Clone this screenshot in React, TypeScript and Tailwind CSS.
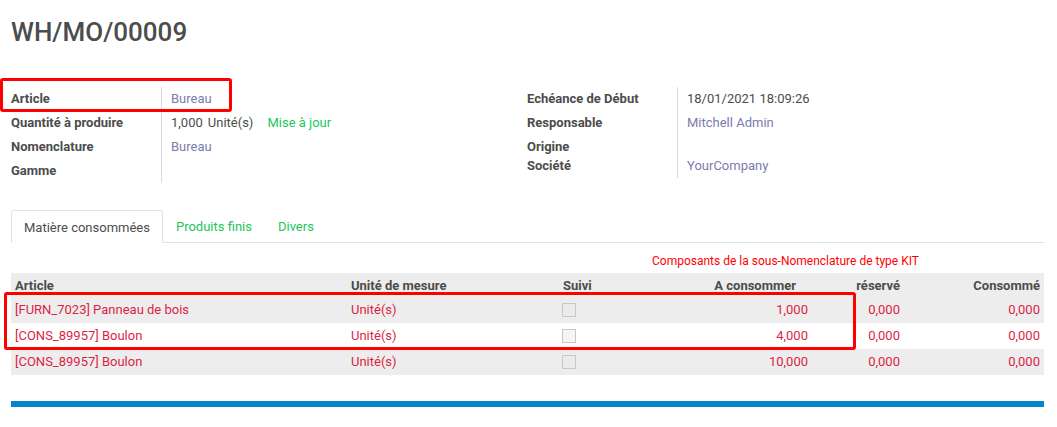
import React from 'react';

const font = { fontFamily: 'Roboto, "Liberation Sans", sans-serif' };

type Row = { article: string; qty: string; shade: boolean };

const rows: Row[] = [
  { article: '[FURN_7023] Panneau de bois', qty: '1,000', shade: true },
  { article: '[CONS_89957] Boulon', qty: '4,000', shade: false },
  { article: '[CONS_89957] Boulon', qty: '10,000', shade: true },
];

const cols = 'grid grid-cols-[336px_212px_100px_153px_92px_140px]';

function Field({ label, children, className = 'h-6' }: { label: string; children?: React.ReactNode; className?: string }) {
  return (
    <div className={`flex ${className}`}>
      <div className="w-[150px] shrink-0 font-bold leading-6 text-[#4c4c4c]">{label}</div>
      <div className="pl-[9px] leading-6 border-l border-[#dcdcdc]">{children}</div>
    </div>
  );
}

export default function App() {
  return (
    <div style={font} className="relative w-[1057px] h-[427px] bg-white text-[13px] text-[#4c4c4c] overflow-hidden">
      {/* Title */}
      <h1 className="pl-[11px] pt-[15px] text-[26px] leading-[34px] font-medium text-[#4c4c4c]">WH/MO/00009</h1>

      {/* Header fields */}
      <div className="relative flex pl-[11px] mt-[38px]">
        <div className="w-[516px]">
          <Field label="Article"><span className="text-[#7c7bad]">Bureau</span></Field>
          <Field label="Quantité à produire">
            <span>1,000</span>
            <span className="ml-[5px]">Unité(s)</span>
            <span className="ml-[14px] text-[#21c65b]">Mise à jour</span>
          </Field>
          <Field label="Nomenclature"><span className="text-[#7c7bad]">Bureau</span></Field>
          <Field label="Gamme" />
        </div>
        <div className="w-[520px]">
          <Field label="Echéance de Début">18/01/2021 18:09:26</Field>
          <Field label="Responsable"><span className="text-[#7c7bad]">Mitchell Admin</span></Field>
          <Field label="Origine" className="h-[19px]" />
          <Field label="Société"><span className="text-[#7c7bad]">YourCompany</span></Field>
        </div>
        {/* Annotation box around Article */}
        <div className="absolute left-0 top-[-9px] w-[232px] h-[34px] border-[3px] border-[#ff0000] rounded-[3px]" />
      </div>

      {/* Tabs */}
      <div className="ml-[11px] mr-[13px] mt-[27px] flex border-b border-[#dee2e6] h-[33px]">
        <div className="px-[12px] h-[33px] leading-[33px] bg-white border border-b-white border-[#dee2e6] rounded-t-[3px] text-[#4c4c4c]">
          Matière consommées
        </div>
        <div className="px-[13px] leading-[33px] text-[#21c65b]">Produits finis</div>
        <div className="px-[13px] leading-[33px] text-[#21c65b]">Divers</div>
      </div>

      <div className="pl-[652px] mt-[11px] text-[12px] leading-[14px] text-[#ff0000]">
        Composants de la sous-Nomenclature de type KIT
      </div>

      {/* Table */}
      <div className="relative ml-[11px] w-[1033px] mt-[5px]">
        <div className={`${cols} h-6 bg-[#ededed] font-bold leading-[26px] text-[#4c4c4c]`}>
          <div className="pl-1">Article</div>
          <div className="pl-1">Unité de mesure</div>
          <div className="pl-1">Suivi</div>
          <div className="pr-4 text-right">A consommer</div>
          <div className="pr-1 text-right">réservé</div>
          <div className="pr-1 text-right">Consommé</div>
        </div>
        {rows.map((r, i) => (
          <div key={i} className={`${cols} h-[26px] leading-[26px] text-[#dc1f45] ${r.shade ? 'bg-[#ededed]' : 'bg-white'}`}>
            <div className="pl-1">{r.article}</div>
            <div className="pl-1">Unité(s)</div>
            <div className="pl-[3px] flex items-center">
              <div className={`w-[14px] h-[14px] border border-[#c8c8c8] ${r.shade ? 'bg-[#ebebeb]' : 'bg-[#f5f5f5]'}`} />
            </div>
            <div className="pr-1 text-right">{r.qty}</div>
            <div className="pr-1 text-right">0,000</div>
            <div className="pr-1 text-right">0,000</div>
          </div>
        ))}
        {/* Annotation box around KIT components */}
        <div className="absolute left-[-7px] top-[19px] w-[852px] h-[58px] border-[3px] border-[#ff0000] rounded-[3px]" />
      </div>

      <div className="ml-[11px] w-[1033px] h-[6px] mt-[26px] bg-[#0584cc]" />
    </div>
  );
}
